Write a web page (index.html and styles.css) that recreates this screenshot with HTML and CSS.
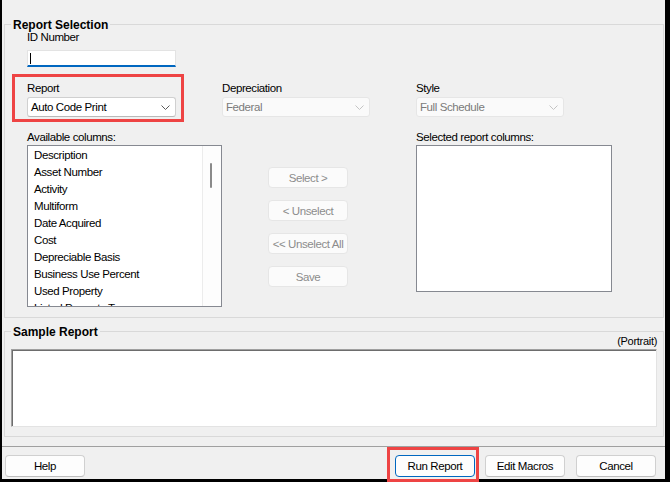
FILE: index.html
```html
<!DOCTYPE html>
<html>
<head>
<meta charset="utf-8">
<title>Report Selection</title>
<link rel="stylesheet" href="styles.css">
</head>
<body>
<div class="window">
  <main class="content">
    <fieldset class="group group-report">
      <legend>Report Selection</legend>
      <div class="rs-body">
        <div class="label">ID Number</div>
        <div class="textbox"><span class="caret"></span></div>
        <div class="grid">
          <div class="label row-label">Report</div>
          <div class="label row-label">Depreciation</div>
          <div class="label row-label">Style</div>
          <div class="combo w149"><span>Auto Code Print</span><svg class="chev" width="9" height="5" viewBox="0 0 9 5"><polyline points="0.5,0.5 4.5,4.5 8.5,0.5"/></svg></div>
          <div class="combo disabled"><span>Federal</span><svg class="chev" width="9" height="5" viewBox="0 0 9 5"><polyline points="0.5,0.5 4.5,4.5 8.5,0.5"/></svg></div>
          <div class="combo disabled"><span>Full Schedule</span><svg class="chev" width="9" height="5" viewBox="0 0 9 5"><polyline points="0.5,0.5 4.5,4.5 8.5,0.5"/></svg></div>
          <div class="label cols-label">Available columns:</div>
          <div class="cols-label"></div>
          <div class="label cols-label">Selected report columns:</div>
          <div class="listbox">
            <ul class="items">
              <li>Description</li>
              <li>Asset Number</li>
              <li>Activity</li>
              <li>Multiform</li>
              <li>Date Acquired</li>
              <li>Cost</li>
              <li>Depreciable Basis</li>
              <li>Business Use Percent</li>
              <li>Used Property</li>
              <li>Listed Property Type</li>
            </ul>
            <div class="vscroll"><div class="thumb"></div></div>
          </div>
          <div class="btn-stack">
            <button class="btn-dis">Select &gt;</button>
            <button class="btn-dis">&lt; Unselect</button>
            <button class="btn-dis">&lt;&lt; Unselect All</button>
            <button class="btn-dis">Save</button>
          </div>
          <div class="selbox"></div>
        </div>
      </div>
    </fieldset>
    <fieldset class="group group-sample">
      <legend>Sample Report</legend>
      <div class="sample-body">
        <div class="orientation">(Portrait)</div>
        <div class="sample-box"></div>
      </div>
    </fieldset>
  </main>
  <div class="separator"></div>
  <footer class="footer">
    <button class="btn">Help</button>
    <button class="btn default run">Run Report</button>
    <button class="btn edit">Edit Macros</button>
    <button class="btn cancel">Cancel</button>
  </footer>
  <div class="annot annot-report"></div>
  <div class="annot annot-run"></div>
</div>
</body>
</html>
```

FILE: styles.css
```css
html, body {
  margin: 0;
  padding: 0;
  background: #f0f0f0;
}

body {
  font-family: "Liberation Sans", Arial, sans-serif;
  font-size: 11.5px;
  letter-spacing: -0.4px;
  color: #000;
}

.window {
  position: relative;
  box-sizing: border-box;
  width: 670px;
  height: 482px;
  background: #f0f0f0;
  border-left: 2px solid #000;
  border-right: 5px solid #000;
  border-bottom: 3px solid #000;
  display: flex;
  flex-direction: column;
}

.content {
  padding: 16px 1px 0 2px;
}

.group {
  margin: 0;
  padding: 0;
  border: 1px solid #d9d9d9;
  min-width: 0;
}

.group legend {
  margin-left: 6px;
  padding: 2px 2px 0 2px;
  font-weight: bold;
  font-size: 12px;
  line-height: 14px;
  letter-spacing: 0;
}

.label {
  line-height: 14px;
  white-space: nowrap;
}

.rs-body {
  margin-top: -2px;
  padding: 0 0 10px 22px;
}

.textbox {
  box-sizing: border-box;
  width: 149px;
  height: 17px;
  margin-top: 6px;
  background: #fff;
  border: 1px solid #e3e3e3;
  border-bottom: 2px solid #0067c0;
}

.caret {
  display: block;
  width: 1px;
  height: 11px;
  margin: 2px 0 0 2px;
  background: #000;
}

.grid {
  display: grid;
  grid-template-columns: 195px 194px 196px;
  align-items: start;
}

.row-label {
  margin-top: 14px;
}

.combo {
  box-sizing: border-box;
  width: 148px;
  height: 20px;
  margin-top: 2px;
  padding: 0 5px 0 3px;
  display: flex;
  align-items: center;
  justify-content: space-between;
  background: #fff;
  border: 1px solid #d0d0d0;
  border-bottom-color: #b9b9b9;
  border-radius: 3px;
  line-height: 18px;
}

.combo.w149 {
  width: 149px;
}

.chev polyline {
  fill: none;
  stroke: #5a5a5a;
  stroke-width: 1;
}

.combo.disabled {
  background: #fafafa;
  border-color: #e6e6e6;
  color: #7a7a7a;
}

.combo.disabled .chev polyline {
  stroke: #c4c4c4;
}

.cols-label {
  margin-top: 13px;
  min-height: 14px;
}

.listbox {
  box-sizing: border-box;
  width: 195px;
  height: 162px;
  margin-top: 1px;
  background: #fff;
  border: 1px solid #868991;
  display: flex;
  overflow: hidden;
}

.items {
  flex: 1;
  margin: 0;
  padding: 1px 0 0 6px;
  list-style: none;
  overflow: hidden;
}

.items li {
  line-height: 17px;
  white-space: nowrap;
}

.vscroll {
  box-sizing: border-box;
  width: 19px;
  border-left: 1px solid #ececec;
  background: #fdfdfd;
  padding: 17px 0 0 7px;
}

.thumb {
  width: 2px;
  height: 25px;
  background: #8a8a8a;
  border-radius: 1px;
}

.btn-stack {
  margin: 23px 0 0 46px;
  display: flex;
  flex-direction: column;
  gap: 12px;
}

.btn-dis {
  box-sizing: border-box;
  width: 80px;
  height: 21px;
  padding: 0;
  background: #fbfbfb;
  border: 1px solid #e6e6e6;
  border-radius: 4px;
  font-family: "Liberation Sans", Arial, sans-serif;
  font-size: 11.5px;
  letter-spacing: -0.4px;
  color: #8c8c8c;
}

.selbox {
  box-sizing: border-box;
  width: 196px;
  height: 147px;
  margin-top: 1px;
  background: #fff;
  border: 1px solid #868991;
}

.group-sample {
  margin-top: 5px;
}

.sample-body {
  padding: 0 6px 9px 6px;
}

.orientation {
  margin-top: -4px;
  margin-bottom: 2px;
  line-height: 12px;
  font-size: 11px;
  letter-spacing: -0.3px;
  text-align: right;
}

.sample-box {
  box-sizing: border-box;
  height: 78px;
  background: #fff;
  border: 1px solid;
  border-color: #a0a0a0 #e3e3e3 #e3e3e3 #a0a0a0;
  box-shadow: inset 1px 1px 0 #6d6d6d;
}

.separator {
  margin-top: 9px;
  border-top: 1px solid #a0a0a0;
}

.footer {
  display: flex;
  padding: 8px 0 0 3px;
}

.btn {
  box-sizing: border-box;
  width: 80px;
  height: 22px;
  padding: 0;
  background: #fdfdfd;
  border: 1px solid #d0d0d0;
  border-bottom-color: #bdbdbd;
  border-radius: 4px;
  font-family: "Liberation Sans", Arial, sans-serif;
  font-size: 11.5px;
  letter-spacing: -0.4px;
  color: #000;
}

.btn.default {
  border: 1px solid #0067c0;
}

.btn.run {
  margin-left: 310px;
}

.btn.edit {
  margin-left: 10px;
}

.btn.cancel {
  margin-left: 11px;
}

.annot {
  position: absolute;
  box-sizing: border-box;
  border: 3px solid #ee4444;
  pointer-events: none;
}

.annot-report {
  left: 10px;
  top: 74px;
  width: 172px;
  height: 48px;
}

.annot-run {
  left: 385px;
  top: 447px;
  width: 92px;
  height: 35px;
}
```
